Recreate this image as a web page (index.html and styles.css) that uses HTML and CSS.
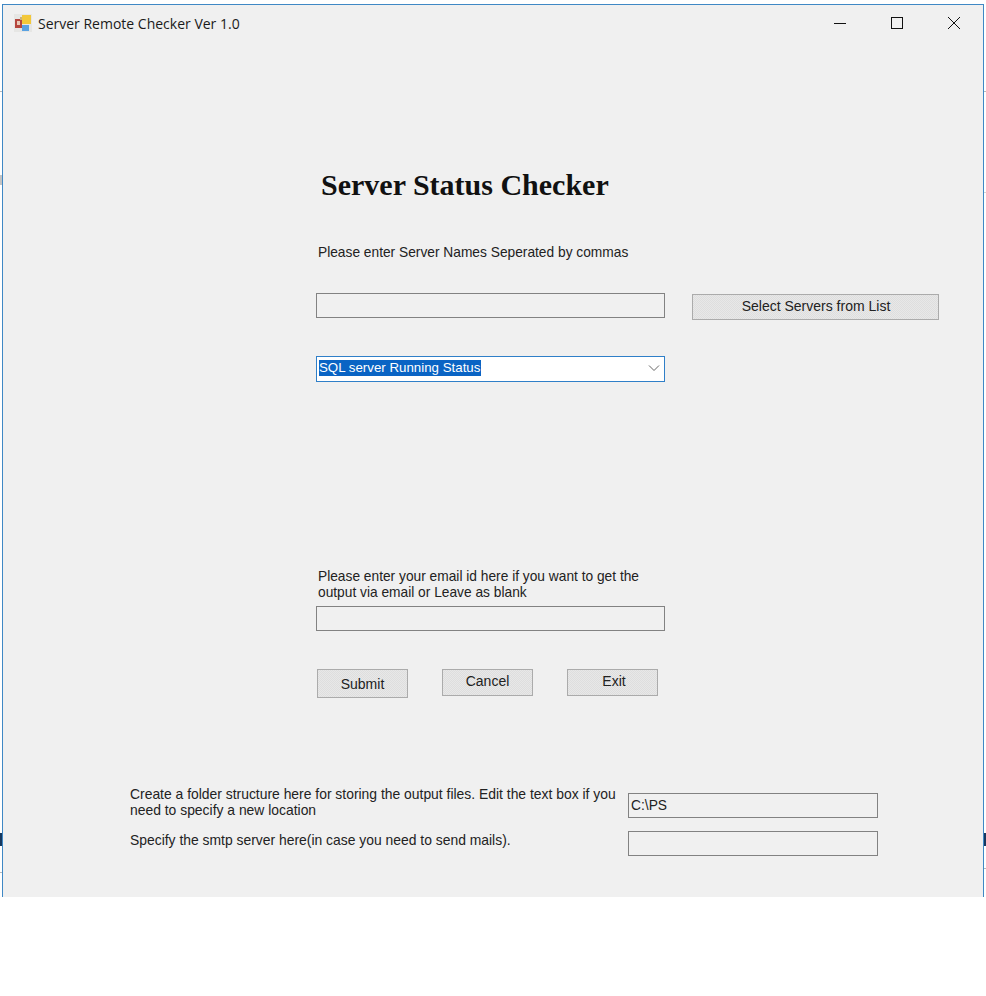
FILE: index.html
```html
<!DOCTYPE html>
<html lang="en">
<head>
<meta charset="utf-8">
<title>Server Remote Checker Ver 1.0</title>
<link rel="stylesheet" href="styles.css">
</head>
<body>
<span class="edge edge-left"></span>
<span class="edge edge-right"></span>
<span class="tick tick-left-a"></span>
<span class="tick tick-left-b"></span>
<span class="tick tick-left-c"></span>
<span class="tick tick-right-a"></span>
<span class="tick tick-right-b"></span>
<span class="tick tick-right-c"></span>
<div class="window">
  <header class="titlebar">
    <svg class="app-icon" width="18" height="18" viewBox="0 0 18 18">
      <rect x="0" y="0" width="18" height="18" fill="#e6e6e4"/>
      <rect x="1" y="5" width="7" height="9" fill="#b5473f"/>
      <rect x="3" y="7" width="3" height="4" fill="#e9c9b8"/>
      <rect x="8" y="1" width="9" height="9" fill="#f3c83a"/>
      <rect x="6" y="3" width="2" height="3" fill="#c9b27a"/>
      <rect x="8" y="11" width="7" height="6" fill="#5aa2e2"/>
    </svg>
    <span class="title">Server Remote Checker Ver 1.0</span>
    <div class="controls">
      <svg width="14" height="14" viewBox="0 0 14 14"><path d="M1 7.5H13" stroke="#111" fill="none"/></svg>
      <svg width="14" height="14" viewBox="0 0 14 14"><rect x="1.5" y="1.5" width="11" height="11" stroke="#111" fill="none"/></svg>
      <svg width="14" height="14" viewBox="0 0 14 14"><path d="M1 1L13 13M13 1L1 13" stroke="#111" fill="none"/></svg>
    </div>
  </header>
  <main class="form">
    <h1 class="heading">Server Status Checker</h1>
    <p class="label names-label">Please enter Server Names Seperated by commas</p>
    <div class="row server-row">
      <input class="field wide" type="text">
      <button class="btn list-btn" type="button">Select Servers from List</button>
    </div>
    <div class="combo">
      <span class="selected">SQL server Running Status</span>
      <svg width="12" height="8" viewBox="0 0 12 8"><path d="M1 1.5L6 6.5L11 1.5" stroke="#666" fill="none"/></svg>
    </div>
    <p class="label email-label">Please enter your email id here if you want to get the<br>output via email or Leave as blank</p>
    <input class="field wide email-field" type="text">
    <div class="row actions">
      <button class="btn submit" type="button">Submit</button>
      <button class="btn cancel" type="button">Cancel</button>
      <button class="btn exit" type="button">Exit</button>
    </div>
  </main>
  <section class="settings">
    <div class="row setting-one">
      <p class="label setting-label">Create a folder structure here for storing the output files. Edit the text box if you<br>need to specify a new location</p>
      <input class="field path path-one" type="text" value="C:\PS">
    </div>
    <div class="row setting-two">
      <p class="label setting-label setting-label-two">Specify the smtp server here(in case you need to send mails).</p>
      <input class="field path" type="text">
    </div>
  </section>
</div>
</body>
</html>
```

FILE: styles.css
```css
* { box-sizing: border-box; }
html, body { margin: 0; padding: 0; background: #fff; }
body { width: 986px; height: 996px; padding: 4px 0 0 2px; overflow: hidden; position: relative; }

.edge { position: absolute; width: 2px; height: 13px; top: 833px; background: #16385f; }
.edge-left { left: 0; }
.edge-right { left: 984px; }

.tick { position: absolute; width: 2px; height: 1px; background: #b9b9b9; }
.tick-left-a { left: 0; top: 91px; }
.tick-left-b { left: 0; top: 175px; height: 10px; background: #c4c4c4; }
.tick-left-c { left: 0; top: 872px; }
.tick-right-a { left: 984px; top: 91px; }
.tick-right-b { left: 984px; top: 192px; background: #d4d4d4; }
.tick-right-c { left: 984px; top: 868px; }

.window {
  width: 982px; height: 893px;
  background: #f0f0f0;
  border: 1px solid #3f88c5;
  border-bottom: 0;
  font-family: "Liberation Sans", Arial, sans-serif;
  color: #222;
}

.titlebar { display: flex; align-items: center; height: 36px; padding-left: 11px; }
.app-icon { flex: none; }
.title { margin-left: 6px; font: 14px "Open Sans", "Noto Sans", sans-serif; color: #1a1a1a; }
.controls { margin-left: auto; display: flex; gap: 43px; padding-right: 22px; }
.controls svg { display: block; }

.form { padding-left: 313px; }
.heading {
  margin: 128px 0 0 5px;
  font: bold 30px/32px "Liberation Serif", "Times New Roman", serif;
  color: #111;
}
.label { margin: 0; font-size: 13.75px; line-height: 16px; }
.names-label { margin: 44px 0 0 2px; }

.row { display: flex; align-items: flex-start; }
.server-row { margin-top: 32px; }

.field {
  display: block;
  height: 25px;
  border: 1px solid #828282;
  background: #f0f0f0;
  font: 13.8px "Liberation Sans", Arial, sans-serif;
  color: #222;
  padding: 0 2px;
  outline: 0;
}
.wide { width: 349px; }

.btn {
  height: 26px;
  padding: 0;
  border: 1px solid #ababab;
  background: repeating-conic-gradient(#e8e8e8 0 25%, #dedede 0 50%) 0 0 / 2px 2px;
  font: 14px "Liberation Sans", Arial, sans-serif;
  color: #222;
}
.list-btn { width: 247px; margin: 1px 0 0 27px; padding: 0 0 2px 1px; }

.combo {
  display: flex;
  align-items: center;
  justify-content: space-between;
  width: 349px; height: 26px;
  margin-top: 36px;
  padding: 0 4px 2px 2px;
  background: #fff;
  border: 1px solid #2f7fc8;
  font-size: 13.3px;
}
.selected { background: #0a64c4; color: #fff; line-height: 16px; padding: 0 1px 0 0; }

.email-label { margin: 187px 0 0 2px; }
.email-field { margin-top: 5px; }

.actions { margin-top: 38px; align-items: flex-start; padding-left: 1px; }
.submit { width: 91px; height: 29px; }
.cancel { width: 91px; height: 27px; margin-left: 34px; padding-bottom: 3px; }
.exit { width: 91px; height: 27px; margin-left: 34px; padding: 0 0 3px 3px; }

.settings { margin-top: 88px; padding-left: 127px; }
.setting-label { width: 498px; white-space: nowrap; font-size: 13.9px; }
.path { width: 250px; height: 25px; }
.path-one { margin-top: 7px; }
.setting-two { margin-top: 13px; }
.setting-label-two { margin-top: 1px; }
```
